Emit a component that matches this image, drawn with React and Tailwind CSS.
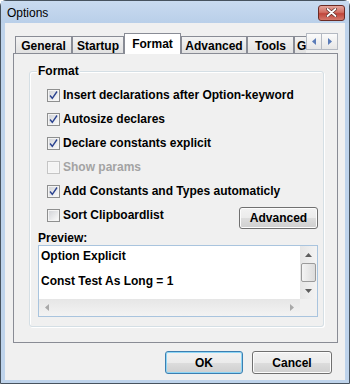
import { useState } from "react";

const TABS = [
  { label: "General", w: "w-[57px]" },
  { label: "Startup", w: "w-[52px]" },
  { label: "Format", w: "w-[57px]", active: true },
  { label: "Advanced", w: "w-[66px]" },
  { label: "Tools", w: "w-[47px]" },
];

const OPTIONS = [
  { label: "Insert declarations after Option-keyword", checked: true },
  { label: "Autosize declares", checked: true },
  { label: "Declare constants explicit", checked: true },
  { label: "Show params", checked: false, disabled: true },
  { label: "Add Constants and Types automaticly", checked: true },
];

function Check({ checked, disabled }) {
  return (
    <span
      className={`relative w-[13px] h-[13px] shrink-0 border flex items-center justify-center ${
        disabled ? "border-[#c5c5c5] bg-[#f7f7f7]" : "border-[#8e8f8f] bg-[#f4f4f4]"
      }`}
    >
      <span
        className={`w-[9px] h-[9px] ${
          disabled ? "bg-[#f4f4f4]" : "bg-gradient-to-br from-[#d3d5d9] to-[#f9f9f9]"
        }`}
      />
      {checked && (
        <svg width="11" height="11" viewBox="0 0 11 11" className="absolute left-0 top-0">
          <path d="M2 5.5 L4.3 8.3 L9 1.5" fill="none" stroke="#2b4390" strokeWidth="1.4" />
        </svg>
      )}
    </span>
  );
}

function Row({ label, checked, disabled }) {
  return (
    <label className="h-[24px] flex items-center gap-[3px] pl-[17px] font-bold">
      <Check checked={checked} disabled={disabled} />
      <span className={disabled ? "text-[#a3a3a3]" : "text-black"}>{label}</span>
    </label>
  );
}

function Arrow({ dir, color = "#5d5d5d" }) {
  const pts = {
    up: "0,4 3.5,0 7,4",
    down: "0,0 3.5,4 7,0",
    left: "4,0 0,3.5 4,7",
    right: "0,0 4,3.5 0,7",
  }[dir];
  const vert = dir === "up" || dir === "down";
  return (
    <svg width={vert ? 7 : 4} height={vert ? 4 : 7} viewBox={vert ? "0 0 7 4" : "0 0 4 7"}>
      <polygon points={pts} fill={color} />
    </svg>
  );
}

export default function App() {
  const [opts, setOpts] = useState(OPTIONS);
  const [sortClip, setSortClip] = useState(false);

  return (
    <div className="w-[350px] h-[384px] border border-[#47535f] rounded-t-[6px] bg-[#bed3eb] flex flex-col font-['Liberation_Sans',Arial,sans-serif] text-[12px] leading-[14px] text-black select-none">
      {/* title bar */}
      <div className="h-[22px] flex items-center justify-between pl-[6px] pr-[4px] bg-gradient-to-b from-[#c9dbf0] to-[#b9cfe9]">
        <span className="text-[12px] mt-[1px]">Options</span>
        <button className="w-[27px] h-[16px] mt-[1px] rounded-[3px] border border-[#6b2a24] bg-[linear-gradient(#e4a59c,#d26f63_45%,#c0453a_55%,#d4796c)] flex items-center justify-center">
          <svg width="11" height="9" viewBox="0 0 11 9">
            <path d="M1.5 1 L9.5 8 M9.5 1 L1.5 8" stroke="#5a2a26" strokeWidth="3.2" strokeLinecap="round" />
            <path d="M1.5 1 L9.5 8 M9.5 1 L1.5 8" stroke="#ffffff" strokeWidth="1.8" strokeLinecap="round" />
          </svg>
        </button>
      </div>

      {/* client */}
      <div className="mx-[4px] mb-[3px] flex-1 bg-[#f0f0f0] flex flex-col pt-[10px] pl-[8px] pr-[7px]">
        {/* tab strip */}
        <div className="h-[20px] flex items-end pl-[2px]">
          {TABS.map((t) =>
            t.active ? (
              <div
                key={t.label}
                className={`${t.w} h-[21px] -mb-px relative z-10 bg-white border border-b-0 border-[#898c95] flex justify-center pt-[3px] font-bold`}
              >
                {t.label}
              </div>
            ) : (
              <div
                key={t.label}
                className={`${t.w} h-[17px] bg-gradient-to-b from-[#f3f3f3] to-[#e1e1e1] border border-b-0 border-[#898c95] flex justify-center pt-[2px] font-bold`}
              >
                {t.label}
              </div>
            )
          )}
          <div className="w-[12px] h-[17px] overflow-hidden bg-gradient-to-b from-[#f3f3f3] to-[#e1e1e1] border-t border-l border-[#898c95] pl-[2px] pt-[2px] font-bold">
            G
          </div>
          <div className="w-[32px] h-[17px] mb-[3px] flex">
            <div className="w-[16px] h-full border border-[#b4b9c2] bg-gradient-to-b from-[#fbfbfb] to-[#e6e6e6] flex items-center justify-center">
              <Arrow dir="left" color="#5b7cb8" />
            </div>
            <div className="w-[16px] h-full border border-l-0 border-[#b4b9c2] bg-gradient-to-b from-[#fbfbfb] to-[#e6e6e6] flex items-center justify-center">
              <Arrow dir="right" color="#5b7cb8" />
            </div>
          </div>
        </div>

        {/* tab panel */}
        <div className="h-[290px] border border-[#898c95] bg-[#f0f0f0] pt-[17px] pl-[15px]">
          <div className="relative w-[295px] border border-[#d5dfe5] rounded-[3px] shadow-[inset_1px_1px_0_#ffffff,1px_1px_0_#ffffff] pt-[11px] pb-[9px]">
            <span className="absolute left-[7px] -top-[8px] px-[1px] bg-[#f0f0f0] font-bold">Format</span>

            {opts.map((o, i) => (
              <div
                key={o.label}
                onClick={() =>
                  !o.disabled &&
                  setOpts(opts.map((x, j) => (j === i ? { ...x, checked: !x.checked } : x)))
                }
              >
                <Row label={o.label} checked={o.checked} disabled={o.disabled} />
              </div>
            ))}

            <div className="h-[24px] flex items-start justify-between pr-[5px]">
              <div onClick={() => setSortClip(!sortClip)}>
                <Row label="Sort Clipboardlist" checked={sortClip} />
              </div>
              <button className="w-[79px] h-[22px] mt-[4px] rounded-[3px] border border-[#707070] bg-[linear-gradient(#f2f2f2,#ebebeb_50%,#dddddd_50%,#cfcfcf)] shadow-[inset_0_0_0_1px_#fcfcfc] font-bold">
                Advanced
              </button>
            </div>

            <div className="h-[14px] mt-[4px] pl-[8px] font-bold">Preview:</div>

            {/* preview box */}
            <div className="ml-[8px] w-[280px] h-[72px] border border-[#a9c4de] bg-white grid grid-cols-[1fr_17px] grid-rows-[1fr_17px]">
              <div className="pl-[2px] pt-[4px] leading-[12.5px] font-bold overflow-hidden">
                <div>Option Explicit</div>
                <div>&nbsp;</div>
                <div>Const Test As Long = 1</div>
              </div>
              <div className="bg-gradient-to-r from-[#e6e6e6] to-[#f3f3f3] flex flex-col items-center">
                <div className="h-[17px] flex items-center justify-center">
                  <Arrow dir="up" />
                </div>
                <div className="w-[15px] flex-1 rounded-[2px] border border-[#9b9b9b] bg-gradient-to-r from-[#f4f4f4] to-[#dcdcdc]" />
                <div className="h-[17px] flex items-center justify-center">
                  <Arrow dir="down" />
                </div>
              </div>
              <div className="bg-gradient-to-b from-[#e6e6e6] to-[#f3f3f3] flex items-center justify-between px-[6px]">
                <Arrow dir="left" color="#a8a8a8" />
                <Arrow dir="right" color="#a8a8a8" />
              </div>
              <div className="bg-[#f0f0f0]" />
            </div>
          </div>
        </div>

        {/* dialog buttons */}
        <div className="mt-[8px] h-[23px] flex justify-end gap-[9px] pr-[6px]">
          <button className="w-[78px] h-[23px] rounded-[3px] border border-[#3c7fb1] bg-[linear-gradient(#f2f2f2,#ebebeb_50%,#dddddd_50%,#cfcfcf)] shadow-[inset_0_0_0_1px_#8ed6f6] font-bold">
            OK
          </button>
          <button className="w-[80px] h-[23px] rounded-[3px] border border-[#707070] bg-[linear-gradient(#f2f2f2,#ebebeb_50%,#dddddd_50%,#cfcfcf)] shadow-[inset_0_0_0_1px_#fcfcfc] font-bold">
            Cancel
          </button>
        </div>
      </div>
    </div>
  );
}
